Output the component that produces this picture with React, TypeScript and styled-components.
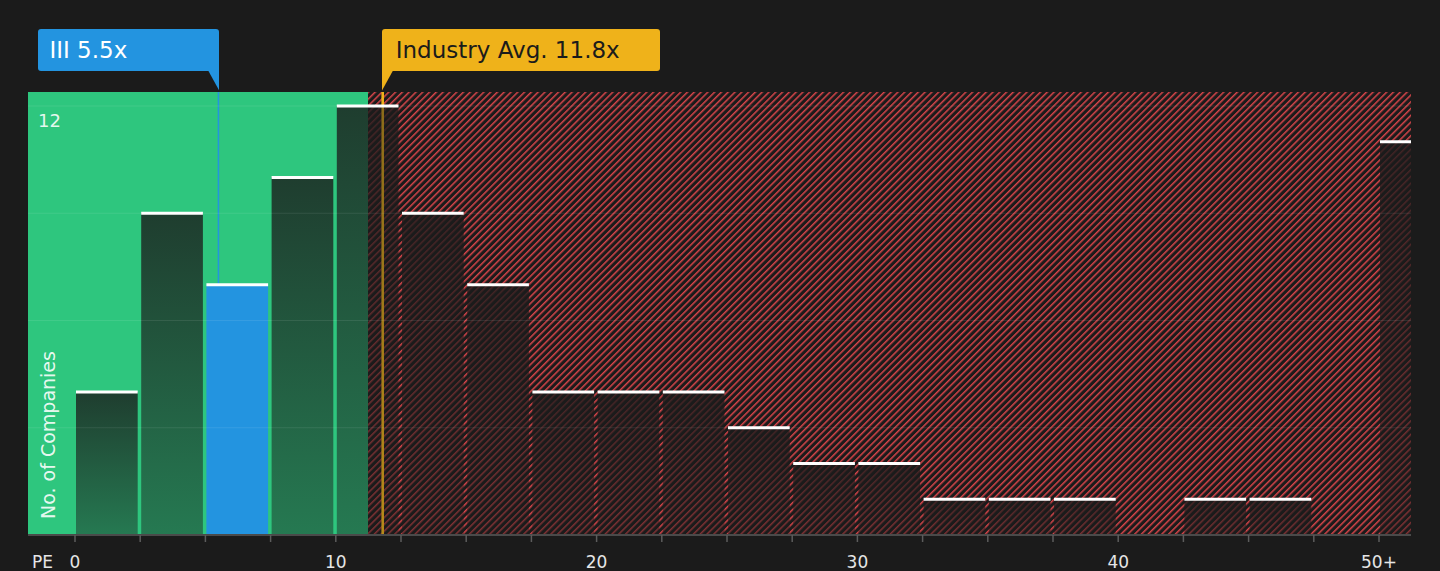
import React from 'react';
import styled, { createGlobalStyle } from 'styled-components';

const GlobalStyle = createGlobalStyle`
  html, body {
    margin: 0;
    padding: 0;
    background: #1b1b1b;
  }
  body {
    font-family: "DejaVu Sans", "Noto Sans", sans-serif;
  }
`;

// plot geometry (px inside the plot svg)
const PLOT_W = 1383;
const PLOT_H = 443;
const AXIS_H = 36;
const ORIGIN_X = 47;
const PX_PER_UNIT = 26.08;
const PX_PER_COMPANY = 35.75;
const BIN = 2.5;
const FAIR_EDGE = 340;

const COMPANY_PE = 5.5;
const INDUSTRY_PE = 11.8;

// companies per 2.5x bin, last one is 50+
const counts = [4, 9, 7, 10, 12, 9, 7, 4, 4, 4, 3, 2, 2, 1, 1, 1, 0, 1, 1, 0, 11];
const highlight = 2;

const xOf = (v: number) => ORIGIN_X + v * PX_PER_UNIT;
const yOf = (c: number) => PLOT_H - c * PX_PER_COMPANY;

const Page = styled.div`
  position: relative;
  width: 1440px;
  height: 571px;
  overflow: hidden;
  background: #1b1b1b;
`;

const ChartFrame = styled.div`
  padding: 92px 29px 0 28px;
`;

const PlotSvg = styled.svg`
  display: block;
  overflow: visible;
`;

const Callout = styled.div<{ $bg: string; $fg: string; $width: number; $pointer: 'left' | 'right' }>`
  position: absolute;
  top: 29px;
  width: ${(p) => p.$width}px;
  height: 42px;
  box-sizing: border-box;
  padding-left: ${(p) => (p.$pointer === 'left' ? 14 : 11)}px;
  background: ${(p) => p.$bg};
  color: ${(p) => p.$fg};
  font-size: 23px;
  line-height: 42px;
  white-space: nowrap;
  border-radius: ${(p) => (p.$pointer === 'left' ? '3px 3px 3px 0' : '3px 3px 0 3px')};

  &::after {
    content: '';
    position: absolute;
    top: 100%;
    ${(p) => (p.$pointer === 'left' ? 'left: 0;' : 'right: 0;')}
    width: 11px;
    height: 20px;
    background: ${(p) => p.$bg};
    clip-path: ${(p) =>
      p.$pointer === 'left'
        ? 'polygon(0 0, 100% 0, 0 100%)'
        : 'polygon(0 0, 100% 0, 100% 100%)'};
  }
`;

const AxisText = styled.text`
  fill: #e6e6e6;
  font-family: "DejaVu Sans", sans-serif;
  font-size: 17px;
`;

const CountText = styled.text`
  fill: rgba(255, 255, 255, 0.88);
  font-family: "DejaVu Sans", sans-serif;
  font-size: 18px;
`;

const YTitle = styled.text`
  fill: rgba(255, 255, 255, 0.9);
  font-family: "DejaVu Sans", sans-serif;
  font-size: 19px;
`;

const Plot: React.FC = () => {
  const ticks = Array.from({ length: 21 }, (_, i) => xOf(i * BIN));
  const xLabels = [
    { v: 0, t: '0' },
    { v: 10, t: '10' },
    { v: 20, t: '20' },
    { v: 30, t: '30' },
    { v: 40, t: '40' },
    { v: 50, t: '50+' },
  ];
  const barW = BIN * PX_PER_UNIT - 3.5;
  const avgX = xOf(INDUSTRY_PE);

  return (
    <PlotSvg width={PLOT_W} height={PLOT_H + AXIS_H} viewBox={`0 0 ${PLOT_W} ${PLOT_H + AXIS_H}`}>
      <defs>
        <pattern id="hatch" width="4.8" height="10" patternUnits="userSpaceOnUse" patternTransform="rotate(45)">
          <rect x="0" y="0" width="1.5" height="10" fill="#d8454a" />
        </pattern>
        <linearGradient id="barShade" x1="0" y1="0" x2="0" y2="1">
          <stop offset="0" stopColor="#1b1b1b" stopOpacity="0.8" />
          <stop offset="1" stopColor="#1b1b1b" stopOpacity="0.45" />
        </linearGradient>
        <clipPath id="plotClip">
          <rect x="0" y="0" width={PLOT_W} height={PLOT_H} />
        </clipPath>
      </defs>

      <g clipPath="url(#plotClip)">
        <rect x="0" y="0" width={FAIR_EDGE} height={PLOT_H} fill="#2ec67e" />
        <rect x={FAIR_EDGE} y="0" width={PLOT_W - FAIR_EDGE} height={PLOT_H} fill="url(#hatch)" />

        <line x1={avgX} y1="0" x2={avgX} y2={PLOT_H} stroke="#efb21a" strokeWidth="2.5" />
        <line
          x1={xOf(COMPANY_PE)}
          y1="0"
          x2={xOf(COMPANY_PE)}
          y2={yOf(counts[highlight])}
          stroke="#2394e0"
          strokeWidth="1.5"
        />

        {counts.map((c, i) => {
          if (!c) return null;
          const y = yOf(c);
          return (
            <rect
              key={i}
              x={xOf(i * BIN) + 1}
              y={y}
              width={barW}
              height={PLOT_H - y}
              fill={i === highlight ? '#2394e0' : 'url(#barShade)'}
            />
          );
        })}

        {/* the average marker shows through the bar shading */}
        <line x1={avgX} y1="0" x2={avgX} y2={PLOT_H} stroke="#efb21a" strokeOpacity="0.42" strokeWidth="2.5" />

        {[3, 6, 9, 12].map((c) => (
          <line key={c} x1="0" x2={PLOT_W} y1={yOf(c)} y2={yOf(c)} stroke="rgba(255,255,255,0.09)" strokeWidth="1" />
        ))}

        {counts.map((c, i) =>
          c ? <rect key={i} x={xOf(i * BIN) + 1} y={yOf(c) - 1.5} width={barW} height="3" fill="#ffffff" /> : null
        )}

        <CountText x="10" y="35">12</CountText>
        <YTitle transform="translate(27,427) rotate(-90)">No. of Companies</YTitle>
      </g>

      <line x1="0" x2={PLOT_W} y1={PLOT_H} y2={PLOT_H} stroke="#4a4a4a" strokeWidth="2" />
      {ticks.map((x, i) => (
        <line key={i} x1={x} x2={x} y1={PLOT_H} y2={PLOT_H + 7} stroke="#5c5c5c" strokeWidth="1.5" />
      ))}
      <AxisText x="4" y={PLOT_H + 33}>PE</AxisText>
      {xLabels.map((l) => (
        <AxisText key={l.t} x={xOf(l.v)} y={PLOT_H + 33} textAnchor="middle">
          {l.t}
        </AxisText>
      ))}
    </PlotSvg>
  );
};

const App: React.FC = () => {
  const companyX = 28 + xOf(COMPANY_PE);
  const industryX = 28 + xOf(INDUSTRY_PE);

  return (
    <>
      <GlobalStyle />
      <Page>
        <ChartFrame>
          <Plot />
        </ChartFrame>
        <Callout $bg="#2394e0" $fg="#ffffff" $width={181} $pointer="right" style={{ left: companyX - 180 }}>
          III 5.5x
        </Callout>
        <Callout $bg="#efb21a" $fg="#1b1b1b" $width={278} $pointer="left" style={{ left: industryX - 1 }}>
          Industry Avg. 11.8x
        </Callout>
      </Page>
    </>
  );
};

export default App;
